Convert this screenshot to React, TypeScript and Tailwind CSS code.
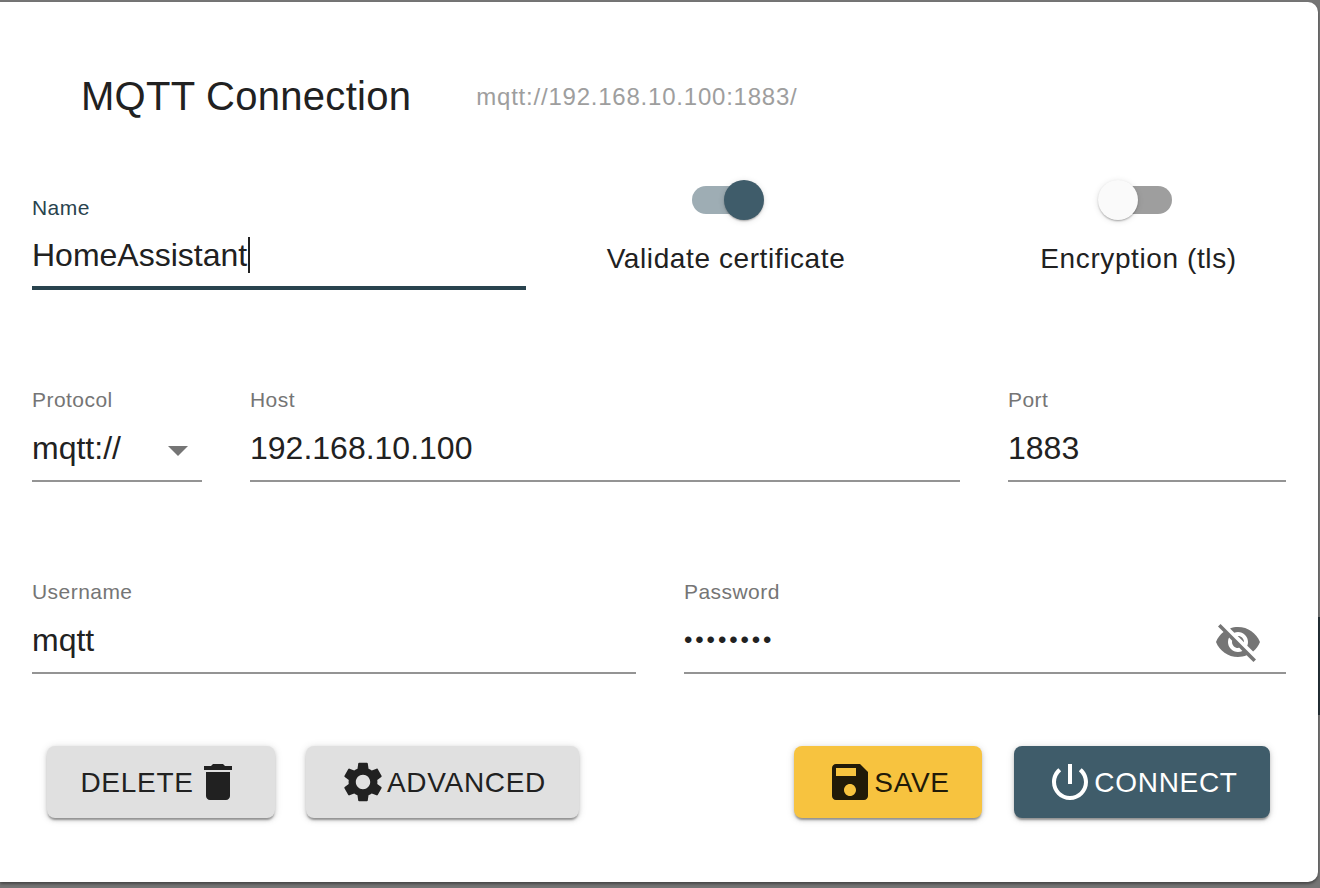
import React from "react";

const ICONS = {
    trash: "M6 19c0 1.1.9 2 2 2h8c1.1 0 2-.9 2-2V7H6v12zM19 4h-3.5l-1-1h-5l-1 1H5v2h14V4z",
    gear: "M19.14 12.94c.04-.3.06-.61.06-.94 0-.32-.02-.64-.07-.94l2.03-1.58c.18-.14.23-.41.12-.61l-1.92-3.32c-.12-.22-.37-.29-.59-.22l-2.39.96c-.5-.38-1.03-.7-1.62-.94l-.36-2.54c-.04-.24-.24-.41-.48-.41h-3.84c-.24 0-.43.17-.47.41l-.36 2.54c-.59.24-1.13.57-1.62.94l-2.39-.96c-.22-.08-.47 0-.59.22L2.74 8.87c-.12.21-.08.47.12.61l2.03 1.58c-.05.3-.09.63-.09.94s.02.64.07.94l-2.03 1.58c-.18.14-.23.41-.12.61l1.92 3.32c.12.22.37.29.59.22l2.39-.96c.5.38 1.03.7 1.62.94l.36 2.54c.05.24.24.41.48.41h3.84c.24 0 .44-.17.47-.41l.36-2.54c.59-.24 1.13-.56 1.62-.94l2.39.96c.22.08.47 0 .59-.22l1.92-3.32c.12-.22.07-.47-.12-.61l-2.01-1.58zM12 15.6c-1.98 0-3.6-1.62-3.6-3.6s1.62-3.6 3.6-3.6 3.6 1.62 3.6 3.6-1.62 3.6-3.6 3.6z",
    save: "M17 3H5c-1.11 0-2 .9-2 2v14c0 1.1.89 2 2 2h14c1.1 0 2-.9 2-2V7l-4-4zm-5 16c-1.66 0-3-1.34-3-3s1.34-3 3-3 3 1.34 3 3-1.34 3-3 3zm3-10H5V5h10v4z",
    power: "M13 3h-2v10h2V3zm4.83 2.17l-1.42 1.42C17.99 7.86 19 9.81 19 12c0 3.87-3.13 7-7 7s-7-3.13-7-7c0-2.19 1.01-4.14 2.58-5.42L6.17 5.17C4.23 6.82 3 9.26 3 12c0 4.97 4.03 9 9 9s9-4.03 9-9c0-2.74-1.23-5.18-3.17-6.83z",
    eyeOff: "M12 7c2.76 0 5 2.24 5 5 0 .65-.13 1.26-.36 1.83l2.92 2.92c1.51-1.26 2.7-2.89 3.43-4.75-1.73-4.39-6-7.5-11-7.5-1.4 0-2.74.25-3.98.7l2.16 2.16C10.74 7.13 11.35 7 12 7zM2 4.27l2.28 2.28.46.46C3.08 8.3 1.78 10.02 1 12c1.73 4.39 6 7.5 11 7.5 1.55 0 3.03-.3 4.38-.84l.42.42L19.73 22 21 20.73 3.27 3 2 4.27zM7.53 9.8l1.55 1.55c-.05.21-.08.43-.08.65 0 1.66 1.34 3 3 3 .22 0 .44-.03.65-.08l1.55 1.55c-.67.33-1.41.53-2.2.53-2.76 0-5-2.24-5-5 0-.79.2-1.53.53-2.2zm4.31-.78l3.15 3.15.02-.16c0-1.66-1.34-3-3-3l-.17.01z",
};

function Icon({ name, className }: { name: keyof typeof ICONS; className?: string }) {
    return (
        <svg viewBox="0 0 24 24" fill="currentColor" className={className}>
            <path d={ICONS[name]} />
        </svg>
    );
}

function Field({
    label,
    className,
    children,
    active,
}: {
    label: string;
    className?: string;
    children: React.ReactNode;
    active?: boolean;
}) {
    return (
        <div className={`flex h-[94px] flex-col ${className ?? ""}`}>
            <label className={`text-[21px] leading-[24px] tracking-[0.45px] ${active ? "text-[#29434e]" : "text-[#757575]"}`}>
                {label}
            </label>
            <div
                className={`flex h-[70px] items-center pt-[4px] text-[32px] text-[#212121] ${
                    active ? "border-b-[4px] border-[#29434e]" : "border-b-2 border-[#949494]"
                }`}
            >
                {children}
            </div>
        </div>
    );
}

function Toggle({ on, label, className }: { on?: boolean; label: string; className?: string }) {
    return (
        <div className={`-mt-[16px] flex flex-col items-center ${className ?? ""}`}>
            <div className={`relative flex h-[40px] w-[72px] items-center ${on ? "ml-[4px] justify-end" : "mr-[9px] justify-start"}`}>
                <div className={`absolute h-[28px] w-[68px] rounded-full ${on ? "left-0 bg-[#9eadb4]" : "right-[-2px] bg-[#9e9e9e]"}`} />
                <div
                    className={`relative h-[40px] w-[40px] rounded-full shadow-[0_2px_2px_-1px_rgba(0,0,0,0.2),0_1px_2px_0_rgba(0,0,0,0.14),0_1px_6px_0_rgba(0,0,0,0.12)] ${
                        on ? "bg-[#3f5c6a]" : "bg-[#fafafa]"
                    }`}
                />
            </div>
            <span className="mt-[19px] whitespace-nowrap text-[28px] leading-[40px] tracking-[0.6px] text-[#212121]">{label}</span>
        </div>
    );
}

function ActionButton({ className, children }: { className: string; children: React.ReactNode }) {
    return (
        <button
            className={`flex h-[72px] items-center justify-center rounded-[8px] text-[28px] tracking-[0.7px] shadow-[0_3px_2px_-1px_rgba(0,0,0,0.3),0_2px_4px_0_rgba(0,0,0,0.16),0_1px_8px_0_rgba(0,0,0,0.12)] ${className}`}
        >
            {children}
        </button>
    );
}

export default function App() {
    return (
        <div className="relative h-[888px] w-[1320px] overflow-hidden bg-[#757575] pt-[2px] font-['Liberation_Sans',Arial,sans-serif]">
            {/* sliver of the window behind the dialog */}
            <div className="absolute right-0 top-[617px] h-[98px] w-[2px] bg-[#263238]" />
            <div className="relative h-[880px] w-[1318px] rounded-r-[10px] bg-white pt-[58px] shadow-[0_2px_3px_rgba(0,0,0,0.4)]">
                {/* Title */}
                <div className="flex h-[72px] items-center pl-[81px]">
                    <h2 className="text-[40px] font-normal tracking-[0.28px] text-[#212121]">MQTT Connection</h2>
                    <span className="ml-[65px] mt-[2px] text-[24px] tracking-[0.78px] text-[#9e9e9e]">mqtt://192.168.10.100:1883/</span>
                </div>

                {/* Name + toggles */}
                <div className="mt-[64px] flex pl-[32px]">
                    <Field label="Name" active className="w-[494px]">
                        <span>HomeAssistant</span>
                        <span className="ml-[1px] h-[36px] w-[2px] bg-[#212121]" />
                    </Field>
                    <Toggle on label="Validate certificate" className="ml-[81px] w-[238px]" />
                    <Toggle label="Encryption (tls)" className="ml-[196px] w-[195px]" />
                </div>

                {/* Protocol, host, port */}
                <div className="mt-[98px] flex gap-[48px] pl-[32px]">
                    <Field label="Protocol" className="w-[170px]">
                        <span className="flex-1">mqtt://</span>
                        <svg viewBox="0 0 20 10" className="mr-[14px] mt-[6px] h-[10px] w-[20px] fill-[#757575]">
                            <path d="M0 0h20L10 10z" />
                        </svg>
                    </Field>
                    <Field label="Host" className="w-[710px]">
                        192.168.10.100
                    </Field>
                    <Field label="Port" className="w-[278px]">
                        1883
                    </Field>
                </div>

                {/* Credentials */}
                <div className="mt-[98px] flex gap-[48px] pl-[32px]">
                    <Field label="Username" className="w-[604px]">
                        mqtt
                    </Field>
                    <Field label="Password" className="w-[602px]">
                        <span className="flex-1 text-[24px] tracking-[2.9px]">••••••••</span>
                        <Icon name="eyeOff" className="mr-[24px] mt-[4px] h-[48px] w-[48px] text-[#757575]" />
                    </Field>
                </div>

                {/* Actions */}
                <div className="mt-[72px] flex pl-[47px]">
                    <ActionButton className="w-[228px] bg-[#e0e0e0] text-[#212121]">
                        <span className="pt-[2px]">DELETE</span>
                        <Icon name="trash" className="h-[48px] w-[48px]" />
                    </ActionButton>
                    <ActionButton className="ml-[31px] w-[273px] bg-[#e0e0e0] text-[#212121]">
                        <Icon name="gear" className="h-[48px] w-[48px]" />
                        <span className="pt-[2px]">ADVANCED</span>
                    </ActionButton>
                    <ActionButton className="ml-[215px] w-[188px] bg-[#f7c33f] text-[#211a08]">
                        <Icon name="save" className="h-[48px] w-[48px]" />
                        <span className="pt-[2px]">SAVE</span>
                    </ActionButton>
                    <ActionButton className="ml-[32px] w-[256px] bg-[#3f5c6a] text-white">
                        <Icon name="power" className="h-[48px] w-[48px]" />
                        <span className="pt-[2px]">CONNECT</span>
                    </ActionButton>
                </div>
            </div>
        </div>
    );
}
